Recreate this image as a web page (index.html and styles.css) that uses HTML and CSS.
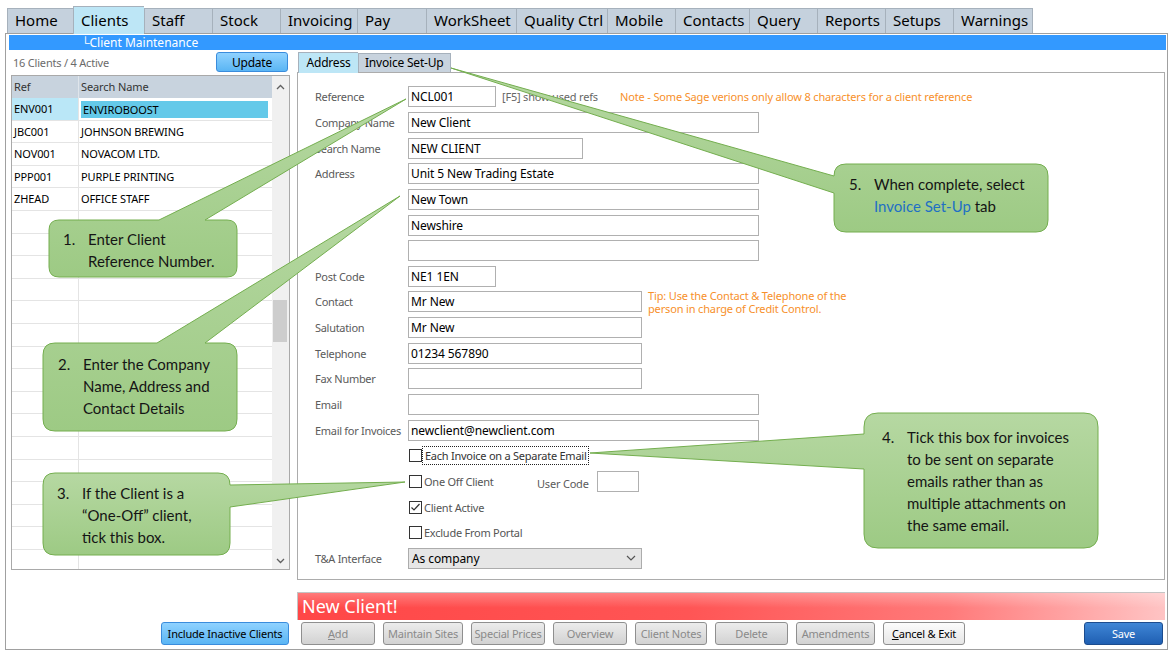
FILE: index.html
```html
<!DOCTYPE html>
<html lang="en">
<head>
    <meta charset="UTF-8">
    <title>Client Maintenance</title>
    <link rel="stylesheet" href="styles.css">
</head>
<body>
<div class="app">
    <div class="tabs">
        <div class="tab">Home</div>
        <div class="tab active">Clients</div>
        <div class="tab">Staff</div>
        <div class="tab">Stock</div>
        <div class="tab">Invoicing</div>
        <div class="tab">Pay</div>
        <div class="tab">WorkSheet</div>
        <div class="tab">Quality Ctrl</div>
        <div class="tab">Mobile</div>
        <div class="tab">Contacts</div>
        <div class="tab">Query</div>
        <div class="tab">Reports</div>
        <div class="tab">Setups</div>
        <div class="tab">Warnings</div>
    </div>

    <div class="frame">
        <div class="titlebar">└Client Maintenance</div>
        <div class="content">
            <!-- client list -->
            <div class="left">
                <div class="left-head">
                    <span class="count">16 Clients / 4 Active</span>
                    <button class="btn btn-blue update">Update</button>
                </div>
                <div class="grid">
                    <div class="grid-body">
                        <div class="grow head"><div>Ref</div><div>Search Name</div></div>
                        <div class="grow sel"><div>ENV001</div><div><span>ENVIROBOOST</span></div></div>
                        <div class="grow"><div>JBC001</div><div>JOHNSON BREWING</div></div>
                        <div class="grow"><div>NOV001</div><div>NOVACOM LTD.</div></div>
                        <div class="grow"><div>PPP001</div><div>PURPLE PRINTING</div></div>
                        <div class="grow"><div>ZHEAD</div><div>OFFICE STAFF</div></div>
                        <div class="grow"><div></div><div></div></div>
                        <div class="grow"><div></div><div></div></div>
                        <div class="grow"><div></div><div></div></div>
                        <div class="grow"><div></div><div></div></div>
                        <div class="grow"><div></div><div></div></div>
                        <div class="grow"><div></div><div></div></div>
                        <div class="grow"><div></div><div></div></div>
                        <div class="grow"><div></div><div></div></div>
                        <div class="grow"><div></div><div></div></div>
                        <div class="grow"><div></div><div></div></div>
                        <div class="grow"><div></div><div></div></div>
                        <div class="grow"><div></div><div></div></div>
                        <div class="grow"><div></div><div></div></div>
                        <div class="grow"><div></div><div></div></div>
                        <div class="grow"><div></div><div></div></div>
                        <div class="grow"><div></div><div></div></div>
                    </div>
                    <div class="vscroll">
                        <svg class="arrow-up" width="9" height="6" viewBox="0 0 9 6"><polyline points="1,5 4.5,1.5 8,5" fill="none" stroke="#606060" stroke-width="1.3"/></svg>
                        <div class="thumb"></div>
                        <svg class="arrow-down" width="9" height="6" viewBox="0 0 9 6"><polyline points="1,1 4.5,4.5 8,1" fill="none" stroke="#606060" stroke-width="1.3"/></svg>
                    </div>
                </div>
                <button class="btn btn-blue incl">Include Inactive Clients</button>
            </div>

            <!-- client form -->
            <div class="right">
                <div class="ptabs">
                    <div class="ptab active">Address</div>
                    <div class="ptab">Invoice Set-Up</div>
                </div>
                <div class="panel">
                    <div class="frow">
                        <span class="flabel">Reference</span>
                        <div class="inp w88">NCL001</div>
                        <span class="hint">[F5] show used refs</span>
                        <span class="warn">Note - Some Sage verions only allow 8 characters for a client reference</span>
                    </div>
                    <div class="frow"><span class="flabel">Company Name</span><div class="inp w351">New Client</div></div>
                    <div class="frow"><span class="flabel">Search Name</span><div class="inp w175">NEW CLIENT</div></div>
                    <div class="frow"><span class="flabel">Address</span><div class="inp w351">Unit 5 New Trading Estate</div></div>
                    <div class="frow"><span class="flabel"></span><div class="inp w351">New Town</div></div>
                    <div class="frow"><span class="flabel"></span><div class="inp w351">Newshire</div></div>
                    <div class="frow"><span class="flabel"></span><div class="inp w351"></div></div>
                    <div class="frow"><span class="flabel">Post Code</span><div class="inp w88">NE1 1EN</div></div>
                    <div class="frow">
                        <span class="flabel">Contact</span>
                        <div class="inp w234">Mr New</div>
                        <span class="warn tip">Tip: Use the Contact &amp; Telephone of the<br>person in charge of Credit Control.</span>
                    </div>
                    <div class="frow"><span class="flabel">Salutation</span><div class="inp w234">Mr New</div></div>
                    <div class="frow"><span class="flabel">Telephone</span><div class="inp w234">01234 567890</div></div>
                    <div class="frow"><span class="flabel">Fax Number</span><div class="inp w234"></div></div>
                    <div class="frow"><span class="flabel">Email</span><div class="inp w351"></div></div>
                    <div class="frow"><span class="flabel">Email for Invoices</span><div class="inp w351">newclient@newclient.com</div></div>
                    <div class="frow">
                        <span class="flabel"></span>
                        <span class="cb"></span><span class="cb-text focus">Each Invoice on a Separate Email</span>
                    </div>
                    <div class="frow">
                        <span class="flabel"></span>
                        <div class="cb-wrap"><span class="cb"></span><span class="cb-text">One Off Client</span></div>
                        <span class="ulabel">User Code</span>
                        <div class="inp w42"></div>
                    </div>
                    <div class="frow">
                        <span class="flabel"></span>
                        <span class="cb"><svg width="11" height="11" viewBox="0 0 11 11"><polyline points="1.5,5.5 4,8 9.5,2" fill="none" stroke="#333" stroke-width="1.2"/></svg></span>
                        <span class="cb-text">Client Active</span>
                    </div>
                    <div class="frow">
                        <span class="flabel"></span>
                        <span class="cb"></span><span class="cb-text">Exclude From Portal</span>
                    </div>
                    <div class="frow">
                        <span class="flabel">T&amp;A Interface</span>
                        <div class="inp select w234">As company
                            <svg width="10" height="6" viewBox="0 0 10 6"><polyline points="1,1 5,5 9,1" fill="none" stroke="#555" stroke-width="1.2"/></svg>
                        </div>
                    </div>
                </div>
                <div class="status">New Client!</div>
                <div class="actions">
                    <button class="btn"><u>A</u>dd</button>
                    <button class="btn">Maintain Sites</button>
                    <button class="btn">Special Prices</button>
                    <button class="btn">Overview</button>
                    <button class="btn">Client Notes</button>
                    <button class="btn">Delete</button>
                    <button class="btn">Amendments</button>
                    <button class="btn btn-light"><u>C</u>ancel &amp; Exit</button>
                    <span></span>
                    <button class="btn btn-save">Save</button>
                </div>
            </div>
        </div>
    </div>

    <!-- help callouts -->
    <svg class="overlay" width="1174" height="655" viewBox="0 0 1174 655">
        <defs>
            <linearGradient id="g" x1="0" y1="0" x2="0" y2="1">
                <stop offset="0" stop-color="#b6d8a2"/>
                <stop offset="1" stop-color="#9dca84"/>
            </linearGradient>
        </defs>
        <g fill="url(#g)" stroke="#74ae4f" stroke-width="1">
            <path d="M59,220 L159,220 L406,99 L205,220 L227,220 Q237,220 237,230 L237,267 Q237,277 227,277 L59,277 Q49,277 49,267 L49,230 Q49,220 59,220 Z"/>
            <path d="M55,343 L157,343 L400,196 L205,343 L225,343 Q237,343 237,355 L237,419 Q237,431 225,431 L55,431 Q43,431 43,419 L43,355 Q43,343 55,343 Z"/>
            <path d="M55,473 L218,473 Q230,473 230,485 L405,482 L230,507 L230,543 Q230,555 218,555 L55,555 Q43,555 43,543 L43,485 Q43,473 55,473 Z"/>
            <path d="M878,413 L1084,413 Q1098,413 1098,427 L1098,534 Q1098,548 1084,548 L878,548 Q864,548 864,534 L864,469 L590,453 L864,434 L864,427 Q864,413 878,413 Z"/>
            <path d="M846,164 L1036,164 Q1048,164 1048,176 L1048,220 Q1048,232 1036,232 L846,232 Q834,232 834,220 L834,193 L451,68 L834,176 Q834,164 846,164 Z"/>
        </g>
    </svg>
    <div class="callout c1"><span class="num">1.</span><span>Enter Client<br>Reference Number.</span></div>
    <div class="callout c2"><span class="num">2.</span><span>Enter the Company<br>Name, Address and<br>Contact Details</span></div>
    <div class="callout c3"><span class="num">3.</span><span>If the Client is a<br>“One-Off” client,<br>tick this box.</span></div>
    <div class="callout c4"><span class="num">4.</span><span>Tick this box for invoices<br>to be sent on separate<br>emails rather than as<br>multiple attachments on<br>the same email.</span></div>
    <div class="callout c5"><span class="num">5.</span><span>When complete, select<br><span class="link">Invoice Set-Up</span> tab</span></div>
</div>
</body>
</html>
```

FILE: styles.css
```css
* { margin: 0; padding: 0; box-sizing: border-box; }
body { width: 1174px; height: 655px; overflow: hidden; background: #fff; font-family: 'Noto Sans', 'Open Sans', sans-serif; color: #000; }
.app { position: relative; width: 1174px; height: 655px; }

/* top tabs */
.tabs { display: grid; grid-template-columns: 66px 71px 68px 68px 77px 69px 90px 91px 68px 74px 68px 68px 68px 80px; grid-template-rows: 27px; align-items: end; height: 33px; padding: 6px 0 0 7px; }
.tab { height: 25px; background: #c5d1dd; border: 1px solid #a6b1bc; border-bottom: none; border-right: none; font-size: 15px; line-height: 23px; padding-left: 7px; white-space: nowrap; }
.tab:last-child { border-right: 1px solid #a6b1bc; }
.tab.active { height: 28px; margin-bottom: -1px; background: #bde6f6; position: relative; z-index: 2; line-height: 26px; }

/* main frame */
.frame { margin-left: 5px; width: 1163px; height: 617px; border: 1px solid #a0a0a0; padding: 1px 1px 0 3px; }
.titlebar { height: 15px; background: #3399ff; color: #fff; font-size: 12px; line-height: 15px; padding-left: 72px; }
.content { display: grid; grid-template-columns: 279px 868px; column-gap: 7px; height: 593px; margin-top: 2px; padding-left: 2px; }

.btn { height: 23px; font-family: inherit; font-size: 11px; letter-spacing: -0.2px; border: 1px solid #8f8f8f; border-radius: 3px; background: linear-gradient(#ececec, #d2d2d2); color: #8a8a8a; white-space: nowrap; }
.btn u { text-decoration: underline; }
.btn-blue { background: linear-gradient(#8fd2ff, #5ab5f4); border-color: #3a8cdc; color: #000; }
.btn-light { background: linear-gradient(#fcfcfc, #e6e6e6); color: #000; }
.btn-save { background: linear-gradient(#3f86d6, #1f5fb2); border-color: #1c4c8e; color: #fff; }

/* left column */
.left { display: flex; flex-direction: column; }
.left-head { height: 20px; display: flex; align-items: center; justify-content: space-between; padding-left: 2px; }
.count { font-size: 11px; color: #6b6b6b; letter-spacing: -0.2px; }
.update { width: 72px; height: 20px; margin-right: 2px; font-size: 12px; }
.grid { margin-top: 3px; height: 495px; border: 1px solid #a9a9a9; display: flex; overflow: hidden; }
.grid-body { flex: 1; }
.grow { display: grid; grid-template-columns: 67px 1fr; height: 22.6px; border-bottom: 1px solid #e4e4e4; font-size: 11px; letter-spacing: -0.1px; }
.grow > div { padding-left: 2px; line-height: 21px; white-space: nowrap; }
.grow > div:first-child { border-right: 1px solid #e4e4e4; }
.grow.head { height: 22px; background: #c8d3de; color: #333; border-bottom: none; }
.grow.head > div:first-child { border-right: 1px solid #dfe5eb; }
.grow.sel > div:first-child { background: #bae7f7; }
.grow.sel span { display: block; background: #64c9e9; margin: 3px 4px 0 0; line-height: 17px; padding-left: 2px; }
.vscroll { width: 17px; background: #f0f0f0; position: relative; }
.arrow-up { position: absolute; left: 4px; top: 8px; }
.arrow-down { position: absolute; left: 4px; bottom: 5px; }
.thumb { position: absolute; left: 1px; top: 224px; width: 14px; height: 42px; background: #cdcdcd; }
.incl { margin-top: auto; align-self: flex-end; width: 128px; margin-right: 1px; }

/* right column */
.right { display: flex; flex-direction: column; }
.ptabs { height: 20px; display: flex; align-items: flex-end; padding-left: 1px; }
.ptab { height: 19px; padding: 0 6px; font-size: 12px; line-height: 18px; background: #c8d3de; border: 1px solid #a6b1bc; border-bottom: none; letter-spacing: -0.2px; }
.ptab.active { width: 60px; height: 21px; margin-bottom: -1px; background: #bde6f6; border-right: none; position: relative; z-index: 2; line-height: 20px; text-align: center; }
.panel { height: 508px; border: 1px solid #acacac; padding: 11px 0 0 17px; }
.frow { display: flex; align-items: center; height: 25.65px; }
.flabel { width: 93px; flex-shrink: 0; font-size: 11px; letter-spacing: -0.3px; color: #5b5b5b; white-space: nowrap; }
.inp { height: 21px; border: 1px solid #b0b0b0; font-size: 12px; line-height: 19px; padding-left: 2px; white-space: nowrap; flex-shrink: 0; letter-spacing: -0.1px; }
.w88 { width: 88px; }
.w351 { width: 351px; }
.w175 { width: 175px; }
.w234 { width: 234px; }
.w42 { width: 42px; }
.hint { width: 118px; margin-left: 6px; font-size: 11px; letter-spacing: -0.2px; color: #666; white-space: nowrap; }
.warn { font-size: 11px; letter-spacing: -0.15px; color: #f7902a; white-space: nowrap; }
.tip { margin-left: 6px; line-height: 13px; }
.cb { width: 13px; height: 13px; margin-left: 1px; border: 1px solid #333; background: #fff; flex-shrink: 0; display: flex; align-items: center; justify-content: center; }
.cb-text { margin-left: 2px; font-size: 11px; letter-spacing: -0.25px; color: #555; white-space: nowrap; }
.cb-text.focus { color: #333; outline: 1px dotted #222; outline-offset: 1px; padding: 0 1px; }
.cb-wrap { width: 129px; display: flex; align-items: center; }
.ulabel { width: 60px; font-size: 11px; letter-spacing: -0.2px; color: #5b5b5b; padding-top: 4px; }
.select { background: #e6e6e6; border-color: #acacac; display: flex; align-items: center; justify-content: space-between; padding: 0 5px 0 3px; }

.status { margin-top: 12px; height: 28px; border: 1px solid #c4c4c4; border-bottom: none; border-right: none; background: linear-gradient(rgba(255,255,255,0.28), rgba(255,255,255,0) 55%), linear-gradient(to right, #ff4747 0%, #ff5555 45%, #ff7a7a 75%, #ffc4c4 100%); color: #fff; font-size: 18px; line-height: 26px; padding-left: 4px; }
.actions { margin-top: 2px; display: grid; grid-template-columns: 74px 80px 74px 74px 72px 73px 79px 82px 1fr 79px; column-gap: 8px; padding: 0 2px 0 4px; }

/* callouts */
.overlay { position: absolute; left: 0; top: 0; pointer-events: none; }
.callout { position: absolute; display: flex; font-family: Lato, 'Noto Sans', sans-serif; font-size: 15px; line-height: 22px; color: #151515; white-space: nowrap; }
.callout .num { width: 25px; flex-shrink: 0; }
.callout .link { color: #1f70c4; }
.c1 { left: 63px; top: 228px; }
.c2 { left: 58px; top: 353px; }
.c3 { left: 57px; top: 482px; }
.c4 { left: 882px; top: 426px; }
.c5 { left: 849px; top: 173px; }
```
